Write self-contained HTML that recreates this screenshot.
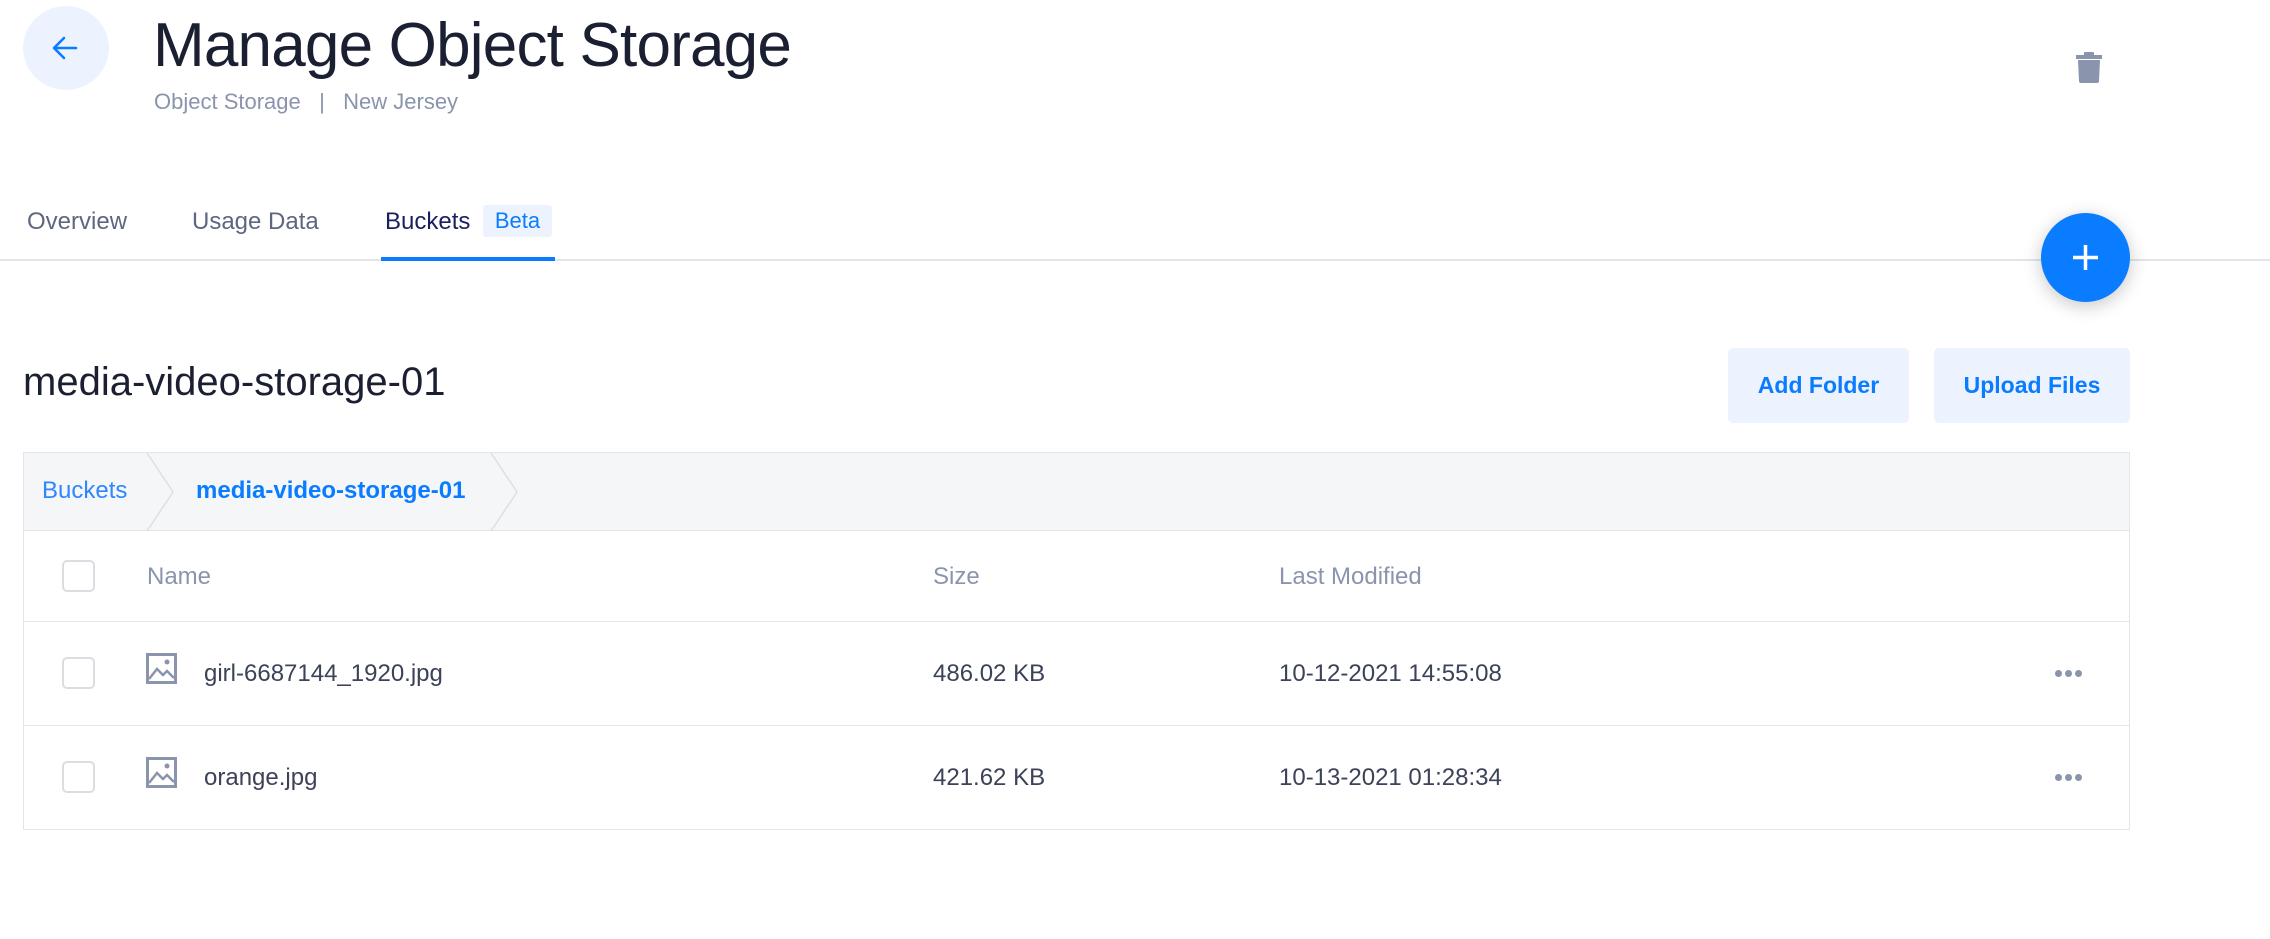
<!DOCTYPE html>
<html><head><meta charset="utf-8"><style>
*{box-sizing:border-box;margin:0;padding:0}
body{width:2270px;height:939px;background:#fff;font-family:"Liberation Sans",sans-serif;position:relative;overflow:hidden}
.a{position:absolute;white-space:nowrap}
.back{left:23px;top:6px;width:86px;height:84px;border-radius:50%;background:#edf3fe}
.title{left:153px;top:12px;font-size:62px;color:#1b1f32;letter-spacing:-0.8px;line-height:68px}
.sub{left:154px;top:88px;font-size:22px;color:#8a94ad;line-height:28px}
.tab{top:208px;font-size:24px;line-height:28px;color:#5f6680}
.line{left:0;top:259px;width:2270px;height:2px;background:#e3e5ea}
.ul{left:381px;top:257px;width:174px;height:4px;background:#0a7cff}
.beta{left:483px;top:205px;width:69px;height:32px;background:#edf3fe;border-radius:3px;color:#0a7cff;font-size:22px;line-height:32px;text-align:center}
.fab{left:2041px;top:213px;width:89px;height:89px;border-radius:50%;background:#0a7cff;box-shadow:0 4px 18px rgba(0,0,0,.22)}
.btn{top:348px;height:75px;background:#edf3fe;border-radius:5px;color:#0a7cff;font-weight:bold;font-size:23px;line-height:75px;text-align:center}
.h2{left:23px;top:358px;font-size:40px;color:#1b1f32;line-height:48px}
.tbl{left:23px;top:452px;width:2107px;height:378px;border:1px solid #e3e5ea}
.bc{left:24px;top:453px;width:2105px;height:78px;background:#f5f6f8;border-bottom:1px solid #e3e5ea}
.row{left:24px;width:2105px;height:1px;background:#e3e5ea}
.cb{left:62px;width:33px;height:32px;border:2px solid #dcdde2;border-radius:5px;background:#fff}
.hd{font-size:24px;color:#8a94ad;line-height:28px}
.tx{font-size:24px;color:#3c4257;line-height:28px}
.dots{left:2055px;font-size:0}
.dots i{display:inline-block;width:7px;height:7px;border-radius:50%;background:#8a94ad;margin-right:3px}
</style></head><body>
<div class="a back"><svg width="86" height="84" viewBox="0 0 86 84"><path d="M53 42H32M41 32L31 42L41 52" stroke="#0a7cff" stroke-width="2.6" fill="none" stroke-linecap="round" stroke-linejoin="round"/></svg></div>
<div class="a title">Manage Object Storage</div>
<div class="a sub">Object Storage &nbsp;&nbsp;|&nbsp;&nbsp; New Jersey</div>
<svg class="a" style="left:2076px;top:51px" width="26" height="33" viewBox="0 0 26 33"><rect x="0" y="4" width="26" height="4" fill="#8a94ad"/><rect x="8" y="1" width="10" height="4" rx="1" fill="#8a94ad"/><path d="M2 9h22l-1 21a2 2 0 0 1-2 2H5a2 2 0 0 1-2-2z" fill="#8a94ad"/></svg>
<div class="a tab" style="left:27px">Overview</div>
<div class="a tab" style="left:192px">Usage Data</div>
<div class="a tab" style="left:385px;color:#1a1f5e">Buckets</div>
<div class="a beta">Beta</div>
<div class="a line"></div>
<div class="a ul"></div>
<div class="a fab"><svg width="89" height="89" viewBox="0 0 89 89"><path d="M44.5 32v25M32 44.5h25" stroke="#fff" stroke-width="3.5"/></svg></div>
<div class="a h2">media-video-storage-01</div>
<div class="a btn" style="left:1728px;width:181px">Add Folder</div>
<div class="a btn" style="left:1934px;width:196px">Upload Files</div>
<div class="a tbl"></div>
<div class="a bc"></div>
<svg class="a" style="left:140px;top:453px" width="400" height="78"><path d="M7 0L33 39L7 78M351 0L377 39L351 78" stroke="#dcdfe6" stroke-width="1.5" fill="none"/></svg>
<div class="a" style="left:42px;top:477px;font-size:24px;color:#2f86ff;line-height:28px">Buckets</div>
<div class="a" style="left:196px;top:477px;font-size:24px;color:#0a7cff;font-weight:bold;line-height:28px">media-video-storage-01</div>
<div class="a cb" style="top:560px"></div>
<div class="a hd" style="left:147px;top:563px">Name</div>
<div class="a hd" style="left:933px;top:563px">Size</div>
<div class="a hd" style="left:1279px;top:563px">Last Modified</div>
<div class="a row" style="top:621px"></div>
<div class="a row" style="top:725px"></div>
<div class="a cb" style="top:657px"></div>
<div class="a cb" style="top:761px"></div>
<svg class="a" style="left:146px;top:653px" width="31" height="31" viewBox="0 0 31 31"><rect x="1.5" y="1.5" width="28" height="28" fill="none" stroke="#8a94ad" stroke-width="3"/><path d="M3 26L11 16L17 22L21 18L28 25" stroke="#8a94ad" stroke-width="2.5" fill="none"/><circle cx="21" cy="9" r="2.5" fill="#8a94ad"/></svg>
<svg class="a" style="left:146px;top:757px" width="31" height="31" viewBox="0 0 31 31"><rect x="1.5" y="1.5" width="28" height="28" fill="none" stroke="#8a94ad" stroke-width="3"/><path d="M3 26L11 16L17 22L21 18L28 25" stroke="#8a94ad" stroke-width="2.5" fill="none"/><circle cx="21" cy="9" r="2.5" fill="#8a94ad"/></svg>
<div class="a tx" style="left:204px;top:660px">girl-6687144_1920.jpg</div>
<div class="a tx" style="left:933px;top:660px">486.02 KB</div>
<div class="a tx" style="left:1279px;top:660px">10-12-2021 14:55:08</div>
<div class="a dots" style="top:670px"><i></i><i></i><i></i></div>
<div class="a tx" style="left:204px;top:764px">orange.jpg</div>
<div class="a tx" style="left:933px;top:764px">421.62 KB</div>
<div class="a tx" style="left:1279px;top:764px">10-13-2021 01:28:34</div>
<div class="a dots" style="top:774px"><i></i><i></i><i></i></div>
</body></html>
